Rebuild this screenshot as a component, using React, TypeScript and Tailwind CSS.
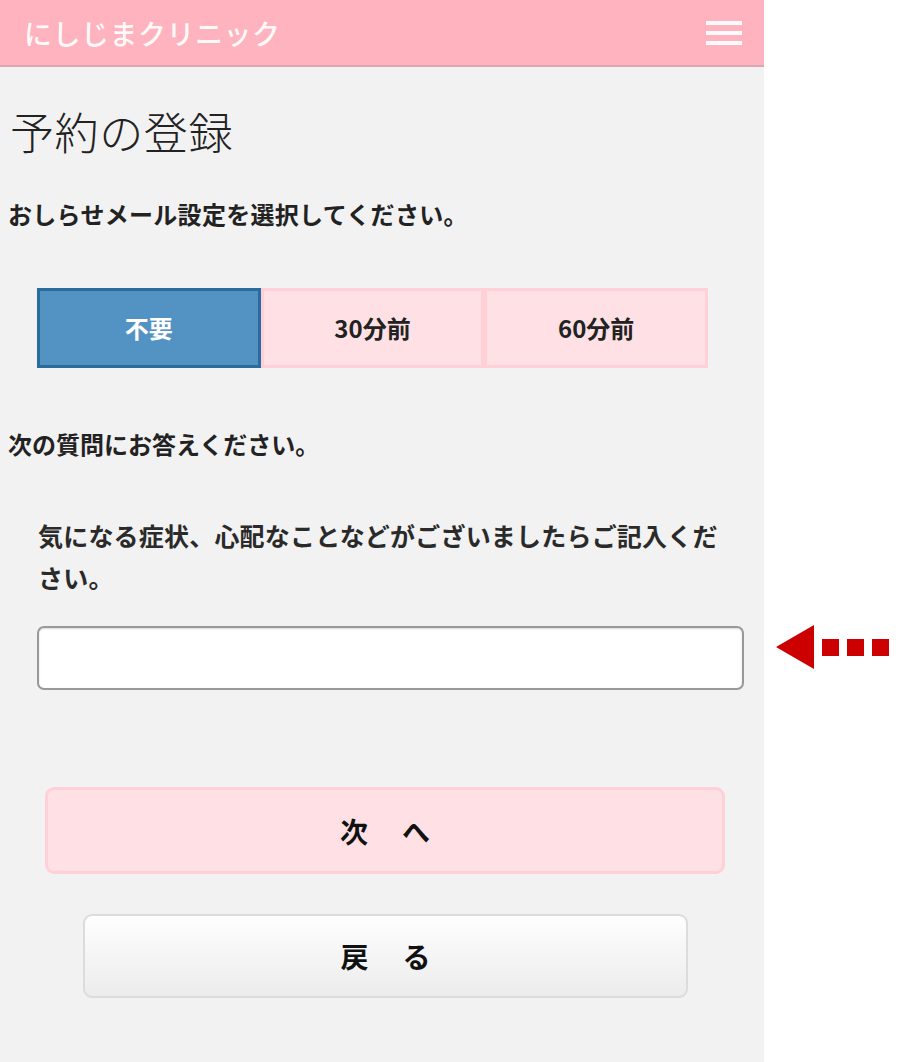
import React from "react";

const font = { fontFamily: '"Noto Sans CJK JP", "Noto Sans", sans-serif' };

export default function App() {
  return (
    <div className="relative flex min-h-[1062px] w-[900px] bg-white text-[#222]" style={font}>
      <div className="flex w-[764px] flex-col bg-[#f2f2f2] pb-[65px]">
        <header className="flex h-[67px] items-center justify-between border-b-2 border-[#dba7af] bg-[#ffb3be] pl-[24px] pr-[22px]">
          <span className="text-[28px] font-medium leading-none tracking-[0.5px] text-white/95">
            にしじまクリニック
          </span>
          <div className="flex w-[36px] flex-col gap-[6px]">
            <span className="h-[4px] w-full bg-white/95" />
            <span className="h-[4px] w-full bg-white/95" />
            <span className="h-[4px] w-full bg-white/95" />
          </div>
        </header>

        <h1 className="ml-[10px] mt-[38px] text-[44px] font-light leading-[52px] tracking-[0.6px] text-[#222]">
          予約の登録
        </h1>

        <p className="ml-[8px] mt-[41px] text-[24px] font-bold leading-[32px] tracking-[0.3px]">
          おしらせメール設定を選択してください。
        </p>

        <div className="ml-[37px] mt-[58px] flex h-[80px] w-[671px]">
          <div className="flex flex-1 items-center justify-center border-[3px] border-[#2b6c9e] bg-[#5393c4] text-[24px] font-semibold text-white">
            不要
          </div>
          <div className="flex flex-1 items-center justify-center border-[3px] border-[#ffd0d8] bg-[#ffe1e5] text-[24px] font-semibold text-[#222]">
            30分前
          </div>
          <div className="flex flex-1 items-center justify-center border-[3px] border-[#ffd0d8] bg-[#ffe1e5] text-[24px] font-semibold text-[#222]">
            60分前
          </div>
        </div>

        <p className="ml-[8px] mt-[60px] text-[24px] font-bold leading-[32px]">
          次の質問にお答えください。
        </p>

        <p className="ml-[38px] mt-[54px] w-[692px] text-[25px] font-semibold leading-[42px] tracking-[0.2px] text-[#2a2a2a]">
          気になる症状、心配なことなどがございましたらご記入ください。
        </p>

        <div className="ml-[37px] mt-[28px] h-[64px] w-[707px] rounded-[7px] border-2 border-[#999] bg-white shadow-[inset_0_1px_2px_rgba(0,0,0,0.15)]" />

        <div className="ml-[45px] mt-[97px] flex h-[87px] w-[680px] items-center justify-center gap-[34px] rounded-[9px] border-[3px] border-[#ffd0d8] bg-[#ffe1e5] text-[28px] font-bold text-[#111]">
          <span>次</span>
          <span>へ</span>
        </div>

        <div className="ml-[83px] mt-[40px] flex h-[84px] w-[605px] items-center justify-center gap-[34px] rounded-[9px] border-2 border-[#dcdcdc] bg-gradient-to-b from-[#fefefe] to-[#ececec] text-[28px] font-bold text-[#111]">
          <span>戻</span>
          <span>る</span>
        </div>
      </div>

      <svg
        className="absolute left-[776px] top-[625px]"
        width="114"
        height="45"
        viewBox="0 0 114 45"
      >
        <polygon points="0,22 38,0 38,44" fill="#cc0000" />
        <rect x="46" y="14" width="17" height="17" fill="#cc0000" />
        <rect x="71" y="14" width="17" height="17" fill="#cc0000" />
        <rect x="96" y="14" width="17" height="17" fill="#cc0000" />
      </svg>
    </div>
  );
}
